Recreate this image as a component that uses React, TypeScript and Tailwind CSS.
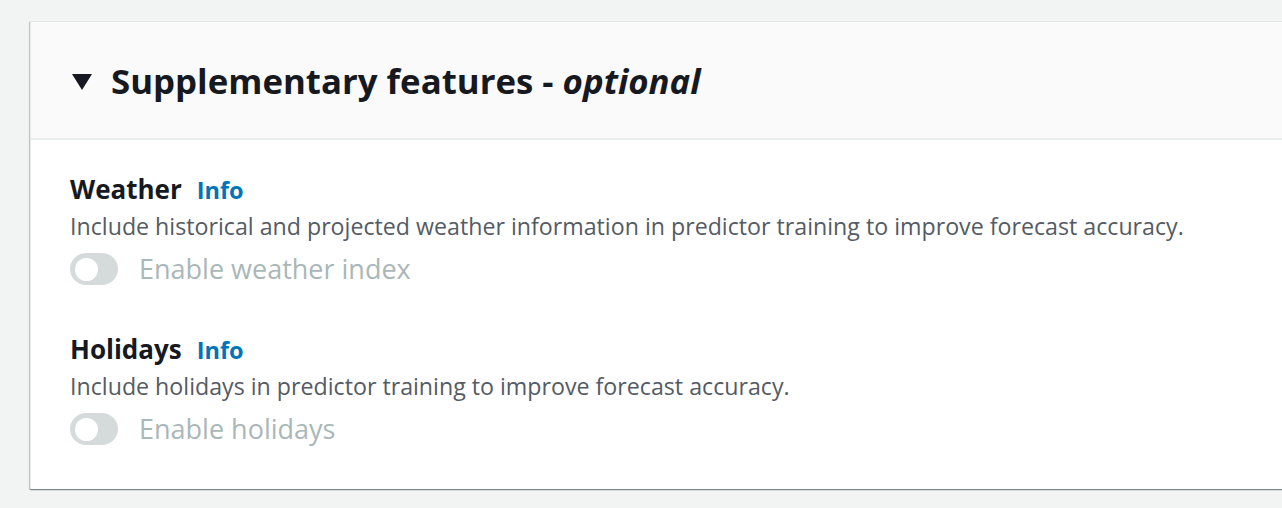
import React, { useState } from "react";

const Toggle: React.FC<{ label: string }> = ({ label }) => {
  const [on] = useState(false);
  return (
    <div className="flex items-center gap-[21px] mt-[12px]">
      <div className="w-[48px] h-[32px] rounded-full bg-[#d5dbdb] flex items-center pl-[5px]">
        <div className={`w-[23px] h-[23px] rounded-full bg-white ${on ? "ml-auto" : ""}`} />
      </div>
      <span className="text-[27px] leading-[32px] text-[#aab7b8]">{label}</span>
    </div>
  );
};

const Feature: React.FC<{ title: string; desc: string; toggle: string }> = ({ title, desc, toggle }) => (
  <div>
    <div className="flex items-baseline gap-[15px]">
      <span className="text-[26px] leading-[32px] font-bold text-[#16191f]">{title}</span>
      <a className="text-[23.5px] leading-[32px] font-bold text-[#0073bb]">Info</a>
    </div>
    <p className="text-[23.2px] leading-[30px] text-[#545b64] mt-[5px]">{desc}</p>
    <Toggle label={toggle} />
  </div>
);

export default function App() {
  return (
    <div
      className="w-[1282px] h-[508px] bg-[#f2f3f3] pl-[30px] pt-[21px] overflow-hidden"
      style={{ fontFamily: '"Open Sans", "Noto Sans", sans-serif' }}
    >
      <div className="w-[1300px] bg-white border-t border-l border-[#e3e6e6] shadow-[0_1px_1px_0_rgba(0,28,36,0.3),1px_1px_1px_0_rgba(0,28,36,0.15),-1px_1px_1px_0_rgba(0,28,36,0.15)]">
        <div className="h-[118px] bg-[#fafafa] border-b-2 border-[#eaeded] flex items-center pl-[41px] pt-[2px]">
          <svg width="20" height="16" viewBox="0 0 20 16" className="mr-[19px] mt-[2px]">
            <polygon points="0,0 20,0 10,16" fill="#16191f" />
          </svg>
          <h2 className="text-[34.8px] font-bold text-[#16191f] leading-[40px]">
            Supplementary features - <i className="font-bold">optional</i>
          </h2>
        </div>
        <div className="pl-[39px] pt-[33px] pb-[44px] flex flex-col gap-[48px]">
          <Feature
            title="Weather"
            desc="Include historical and projected weather information in predictor training to improve forecast accuracy."
            toggle="Enable weather index"
          />
          <Feature
            title="Holidays"
            desc="Include holidays in predictor training to improve forecast accuracy."
            toggle="Enable holidays"
          />
        </div>
      </div>
    </div>
  );
}
